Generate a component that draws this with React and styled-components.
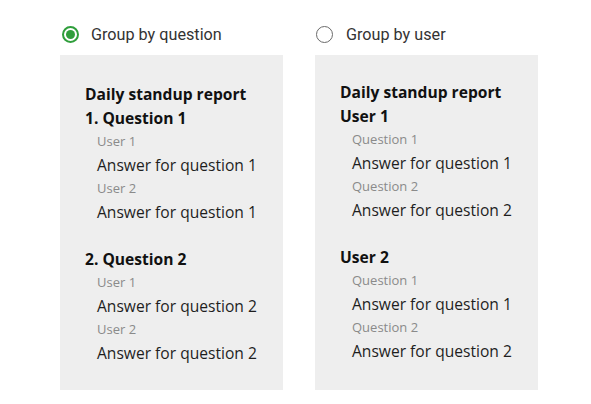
import React from "react";
import styled, { createGlobalStyle } from "styled-components";

const Global = createGlobalStyle`
  html, body { margin: 0; padding: 0; background: #ffffff; }
  body { font-family: "Open Sans", sans-serif; }
`;

const Page = styled.div`
  display: flex;
  gap: 32px;
  padding: 22px 0 0 60px;
`;

const Column = styled.div`
  display: flex;
  flex-direction: column;
  width: 223px;
`;

const RadioRow = styled.label`
  display: flex;
  align-items: center;
  gap: ${(p) => p.$gap}px;
  height: 24px;
  padding-left: ${(p) => p.$offset}px;
  font-family: Roboto, "Liberation Sans", sans-serif;
  font-size: 16.2px;
  color: #333333;
  white-space: nowrap;
  cursor: pointer;
`;

const Circle = styled.span`
  box-sizing: border-box;
  width: 17px;
  height: 17px;
  border-radius: 50%;
  border: ${(p) => (p.$checked ? "2px solid #2f9e3b" : "1.5px solid #6a6a6a")};
  display: flex;
  align-items: center;
  justify-content: center;
  flex-shrink: 0;
  &::after {
    content: "";
    display: ${(p) => (p.$checked ? "block" : "none")};
    width: 9px;
    height: 9px;
    border-radius: 50%;
    background: #2f9e3b;
  }
`;

const Panel = styled.div`
  margin-top: 9px;
  height: 335px;
  box-sizing: border-box;
  background: #eeeeee;
  padding: ${(p) => p.$top}px 10px 0 25px;
`;

const Heading = styled.div`
  font-size: 15.6px;
  font-weight: 700;
  line-height: 23.5px;
  color: #111111;
  white-space: nowrap;
`;

const Group = styled.div`
  margin-top: ${(p) => (p.$first ? 0 : 23.5)}px;
`;

const Label = styled.div`
  padding-left: 12px;
  font-size: 13px;
  line-height: 23.5px;
  color: #8a8a8a;
`;

const Answer = styled.div`
  padding-left: 12px;
  font-size: 15.6px;
  line-height: 23.5px;
  color: #1e1e1e;
  white-space: nowrap;
`;

const Radio = ({ checked, label, offset, gap }) => (
  <RadioRow $offset={offset} $gap={gap}>
    <Circle $checked={checked} />
    {label}
  </RadioRow>
);

const byQuestion = [
  { title: "1. Question 1", items: [["User 1", "Answer for question 1"], ["User 2", "Answer for question 1"]] },
  { title: "2. Question 2", items: [["User 1", "Answer for question 2"], ["User 2", "Answer for question 2"]] },
];

const byUser = [
  { title: "User 1", items: [["Question 1", "Answer for question 1"], ["Question 2", "Answer for question 2"]] },
  { title: "User 2", items: [["Question 1", "Answer for question 1"], ["Question 2", "Answer for question 2"]] },
];

const Report = ({ groups, top }) => (
  <Panel $top={top}>
    <Heading>Daily standup report</Heading>
    {groups.map((g, i) => (
      <Group key={g.title} $first={i === 0}>
        <Heading>{g.title}</Heading>
        {g.items.map(([l, a]) => (
          <React.Fragment key={l}>
            <Label>{l}</Label>
            <Answer>{a}</Answer>
          </React.Fragment>
        ))}
      </Group>
    ))}
  </Panel>
);

export default function App() {
  return (
    <>
      <Global />
      <Page>
        <Column>
          <Radio checked label="Group by question" offset={2} gap={12} />
          <Report groups={byQuestion} top={28} />
        </Column>
        <Column>
          <Radio label="Group by user" offset={1} gap={13} />
          <Report groups={byUser} top={26} />
        </Column>
      </Page>
    </>
  );
}
